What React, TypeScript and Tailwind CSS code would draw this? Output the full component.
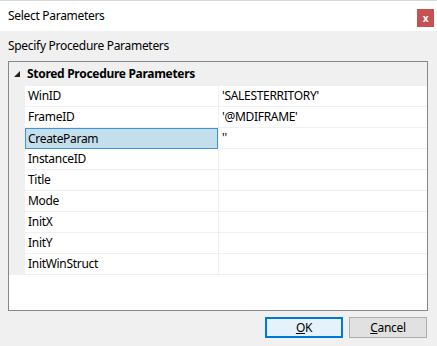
const rows: { name: string; value: string }[] = [
  { name: "WinID", value: "'SALESTERRITORY'" },
  { name: "FrameID", value: "'@MDIFRAME'" },
  { name: "CreateParam", value: "''" },
  { name: "InstanceID", value: "" },
  { name: "Title", value: "" },
  { name: "Mode", value: "" },
  { name: "InitX", value: "" },
  { name: "InitY", value: "" },
  { name: "InitWinStruct", value: "" },
];

export default function App() {
  return (
    <div className="w-[437px] h-[346px] bg-[#f0f0f0] font-['Noto_Sans',sans-serif] text-[12px] tracking-[-0.3px] text-black overflow-hidden">
      <div className="h-px bg-[#dadada]" />
      <div className="h-[30px] bg-white flex justify-between pl-2 pr-[3px]">
        <span className="leading-[30px]">Select Parameters</span>
        <div className="mt-2 w-[17px] h-[18px] bg-[#c75050] flex items-center justify-center text-white text-[10px] font-bold leading-none">
          x
        </div>
      </div>

      <div className="pt-[7px] px-2 leading-[16px]">Specify Procedure Parameters</div>

      <div className="mt-[7px] ml-2 w-[420px] h-[250px] border border-[#828790] bg-white flex flex-col">
        <div className="h-[24px] bg-[#f0f0f0] flex items-center">
          <svg width="8" height="8" viewBox="0 0 8 8" className="ml-[4px] mr-[6px]">
            <polygon points="7,1 7,7 1,7" fill="#222" />
          </svg>
          <span className="font-bold">Stored Procedure Parameters</span>
        </div>
        {rows.map((r) => (
          <div key={r.name} className="h-[21px] flex">
            <div className="w-[16px] bg-[#f0f0f0]" />
            {r.name === "CreateParam" ? (
              <div className="w-[193px] bg-[#c4dfec] border border-[#3f93d8] flex items-center pl-[2px]">
                {r.name}
              </div>
            ) : (
              <div className="w-[193px] border-b border-[#f0f0f0] flex items-center pl-[3px]">{r.name}</div>
            )}
            <div className="flex-1 border-l border-b border-[#f0f0f0] flex items-center pl-[3px]">{r.value}</div>
          </div>
        ))}
      </div>

      <div className="mt-[6px] pr-[10px] flex justify-end gap-[6px]">
        <button className="w-[78px] h-[21px] border-2 border-[#0078d7] bg-[#e5f1fb] leading-none">
          <span className="underline">O</span>K
        </button>
        <button className="w-[78px] h-[21px] border border-[#adadad] bg-[#e1e1e1] leading-none">
          <span className="underline">C</span>ancel
        </button>
      </div>
    </div>
  );
}
